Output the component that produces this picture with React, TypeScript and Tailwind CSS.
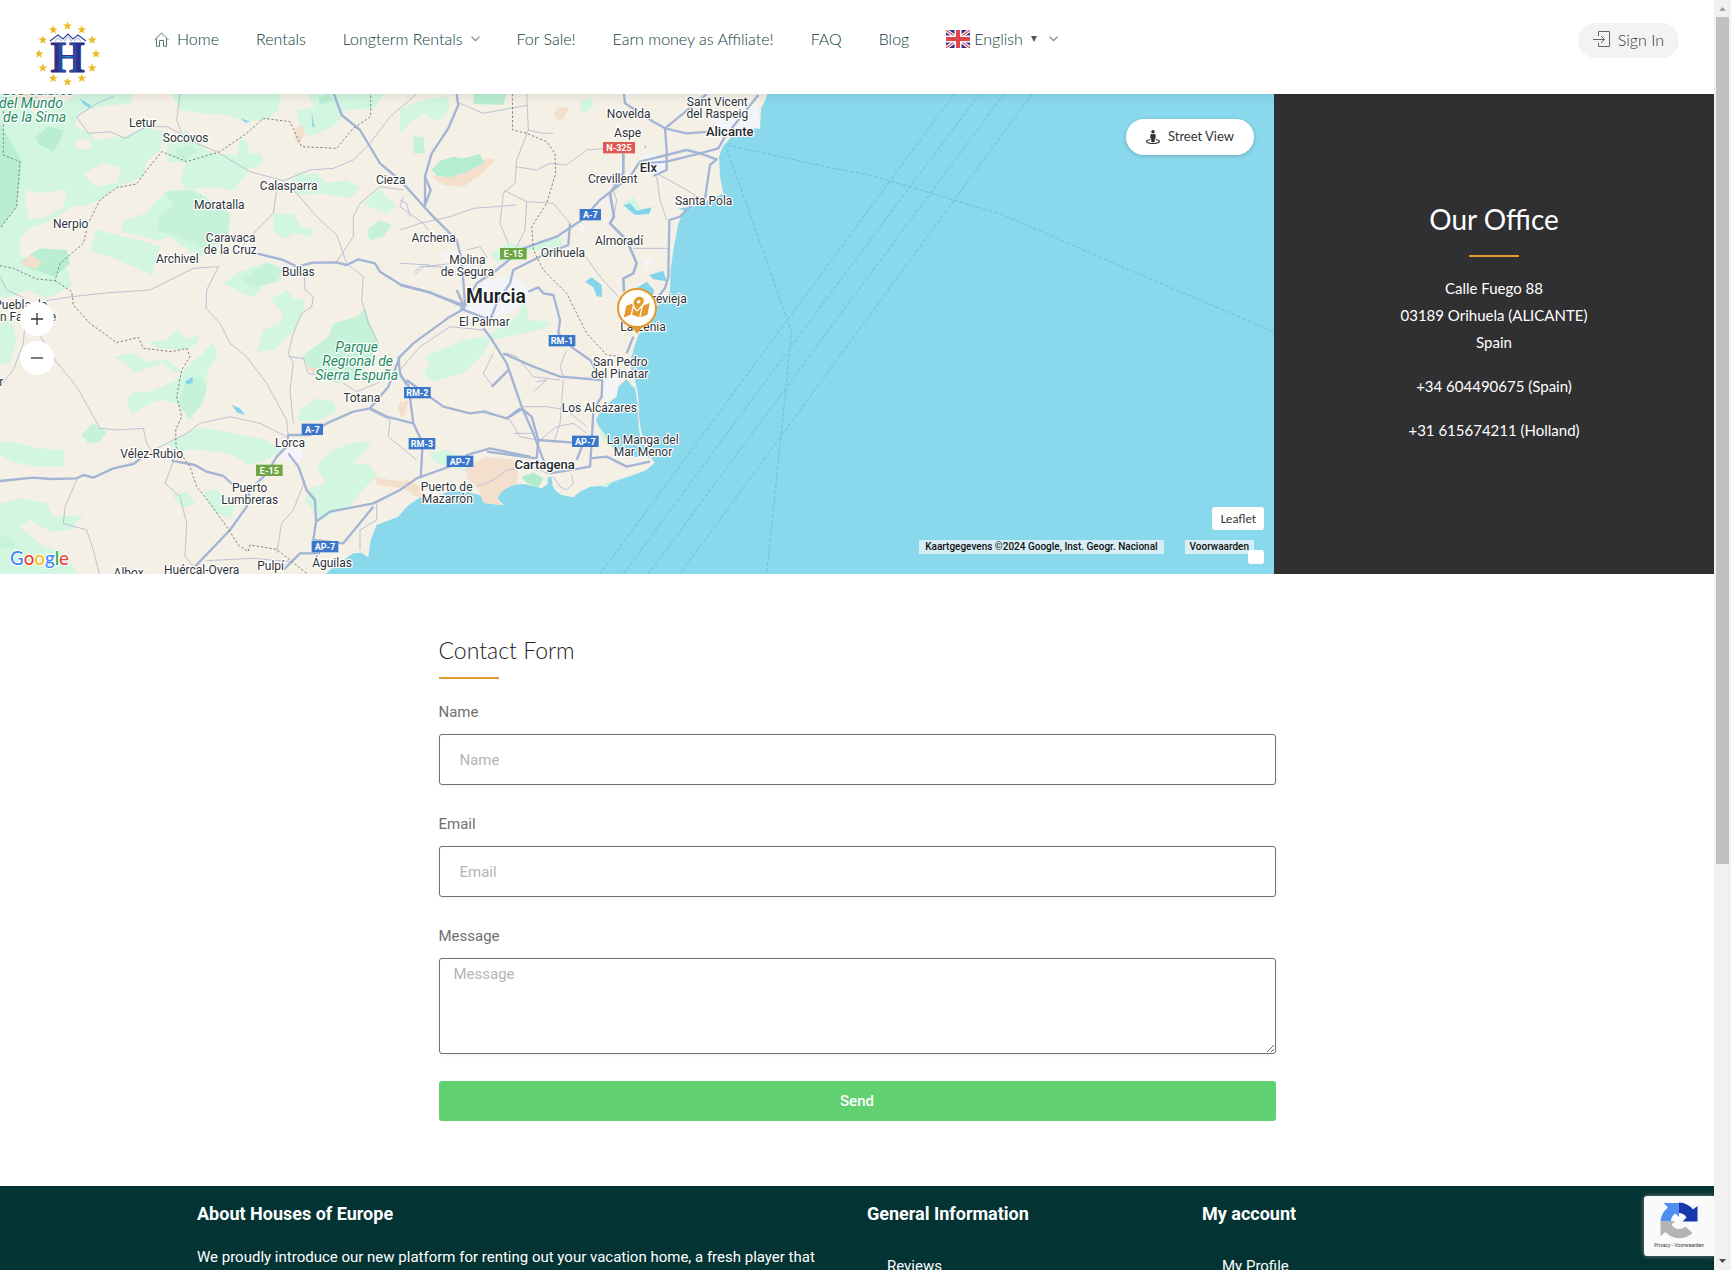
import type { ReactNode } from 'react'
import { FaMapMarkedAlt, FaStreetView } from 'react-icons/fa'

type Label = { x: number; y: number; text: string; kind?: 'town' | 'big' | 'city' | 'park' }
type Shield = { x: number; y: number; text: string; color: string }

const BLUE = '#3a76c9'
const GREEN = '#6ea545'
const RED = '#dd5a55'

// Map drawing units are a third of a pixel
const WEST_LABELS: Label[] = [
  { x: 115, y: 5, text: 'Los Calares', kind: 'park' },
  { x: 93, y: 43, text: 'del Mundo', kind: 'park' },
  { x: 104, y: 85, text: 'de la Sima', kind: 'park' },
  { x: 428, y: 100, text: 'Letur' },
  { x: 557, y: 145, text: 'Socovos' },
  { x: 866, y: 289, text: 'Calasparra' },
  { x: 1172, y: 271, text: 'Cieza' },
  { x: 658, y: 346, text: 'Moratalla' },
  { x: 212, y: 403, text: 'Nerpio' },
  { x: 692, y: 445, text: 'Caravaca' },
  { x: 691, y: 480, text: 'de la Cruz' },
  { x: 532, y: 508, text: 'Archivel' },
  { x: 895, y: 547, text: 'Bullas' },
  { x: 62, y: 646, text: 'Puebla de' },
  { x: 62, y: 682, text: 'Don Fadrique' },
  { x: -6, y: 877, text: 'ar' },
  { x: 1070, y: 775, text: 'Parque', kind: 'park' },
  { x: 1073, y: 817, text: 'Regional de', kind: 'park' },
  { x: 1070, y: 859, text: 'Sierra Espuña', kind: 'park' },
  { x: 1085, y: 925, text: 'Totana' },
  { x: 870, y: 1060, text: 'Lorca' },
  { x: 455, y: 1093, text: 'Vélez-Rubio' },
  { x: 749, y: 1195, text: 'Puerto' },
  { x: 749, y: 1230, text: 'Lumbreras' },
  { x: 386, y: 1450, text: 'Albox' },
  { x: 605, y: 1440, text: 'Huércal-Overa' },
  { x: 812, y: 1429, text: 'Pulpí' },
  { x: 996, y: 1420, text: 'Águilas' },
]

const EAST_LABELS: Label[] = [
  { x: 952, y: 37, text: 'Sant Vicent' },
  { x: 952, y: 73, text: 'del Raspeig' },
  { x: 686, y: 73, text: 'Novelda' },
  { x: 683, y: 130, text: 'Aspe' },
  { x: 989, y: 127, text: 'Alicante', kind: 'big' },
  { x: 745, y: 235, text: 'Elx', kind: 'big' },
  { x: 638, y: 268, text: 'Crevillent' },
  { x: 911, y: 334, text: 'Santa Pola' },
  { x: 101, y: 445, text: 'Archena' },
  { x: 657, y: 454, text: 'Almoradí' },
  { x: 489, y: 490, text: 'Orihuela' },
  { x: 202, y: 511, text: 'Molina' },
  { x: 202, y: 547, text: 'de Segura' },
  { x: 288, y: 620, text: 'Murcia', kind: 'city' },
  { x: 253, y: 697, text: 'El Palmar' },
  { x: 782, y: 628, text: 'Torrevieja' },
  { x: 729, y: 712, text: 'La Zenia' },
  { x: 661, y: 817, text: 'San Pedro' },
  { x: 659, y: 853, text: 'del Pinatar' },
  { x: 598, y: 955, text: 'Los Alcázares' },
  { x: 728, y: 1051, text: 'La Manga del' },
  { x: 729, y: 1087, text: 'Mar Menor' },
  { x: 434, y: 1126, text: 'Cartagena', kind: 'big' },
  { x: 140, y: 1192, text: 'Puerto de' },
  { x: 142, y: 1228, text: 'Mazarrón' },
]

const WEST_SHIELDS: Shield[] = [
  { x: 937, y: 1018, text: 'A-7', color: BLUE },
  { x: 808, y: 1141, text: 'E-15', color: GREEN },
  { x: 975, y: 1370, text: 'AP-7', color: BLUE },
]

const EAST_SHIELDS: Shield[] = [
  { x: 657, y: 173, text: 'N-325', color: RED },
  { x: 571, y: 374, text: 'A-7', color: BLUE },
  { x: 340, y: 491, text: 'E-15', color: GREEN },
  { x: 486, y: 752, text: 'RM-1', color: BLUE },
  { x: 52, y: 908, text: 'RM-2', color: BLUE },
  { x: 66, y: 1061, text: 'RM-3', color: BLUE },
  { x: 556, y: 1054, text: 'AP-7', color: BLUE },
  { x: 180, y: 1114, text: 'AP-7', color: BLUE },
]

const LABEL_STYLES = {
  town: 'fill-[#2e3338] text-[36px]',
  big: 'fill-[#25292d] text-[39px] font-medium',
  city: 'fill-[#202428] text-[58px] font-semibold',
  park: 'fill-[#1f8a64] text-[42px] italic',
}

const NAV_TEXT = "font-['Lato','Liberation_Sans',sans-serif] font-light"

export default function App() {
  return (
    <div className="flex h-screen bg-white font-['Roboto','Liberation_Sans',sans-serif]">
      <div className="relative min-w-0 flex-1 overflow-hidden">
        <Header />
        <main>
          <section className="flex">
            <OfficeMap />
            <OfficeInfo />
          </section>
          <ContactForm />
        </main>
        <Footer />
        <RecaptchaBadge />
      </div>
      <Scrollbar />
    </div>
  )
}

function Header() {
  return (
    <header className={`relative z-10 flex h-[94px] items-start bg-white pr-[35px] pl-9 text-[#0c3c3d] shadow-[0_0_12px_rgba(0,0,0,0.12)] ${NAV_TEXT}`}>
      <a href="#" aria-label="Houses of Europe" className="mt-5 mr-[54px]">
        <Logo />
      </a>
      <nav className="mt-[27px] flex flex-1 items-center gap-[37px] text-[16px] leading-6 whitespace-nowrap">
        <a href="#" className="flex items-center gap-2">
          <HomeIcon />
          Home
        </a>
        <a href="#">Rentals</a>
        <a href="#" className="flex items-center gap-2">
          Longterm Rentals
          <Chevron />
        </a>
        <a href="#">For Sale!</a>
        <a href="#">Earn money as Affiliate!</a>
        <a href="#">FAQ</a>
        <a href="#">Blog</a>
        <a href="#" className="flex items-center gap-1">
          <UnionJack />
          <span>English</span>
          <svg width="6" height="6" viewBox="0 0 6 6" className="mr-2 ml-1" aria-hidden="true">
            <path d="M0 0h6L3 6z" fill="#555" />
          </svg>
          <Chevron />
        </a>
      </nav>
      <a href="#" className="mt-[23px] flex h-[35px] items-center gap-2 rounded-full bg-[#f3f3f3] px-[15px] pb-[2px] text-[16px] text-[#333]">
        <SignInIcon />
        Sign In
      </a>
    </header>
  )
}

function OfficeMap() {
  return (
    <div className="relative h-[480px] min-w-0 flex-1 overflow-hidden bg-[#8ad8ec]">
      <MapDrawing />

      <div className="absolute top-[208px] left-5 flex flex-col gap-[5px]">
        <ZoomButton label="Zoom in">
          <path d="M6 0v12M0 6h12" />
        </ZoomButton>
        <ZoomButton label="Zoom out">
          <path d="M0 6h12" />
        </ZoomButton>
      </div>

      <button className="absolute top-[25px] right-5 flex h-9 w-32 items-center justify-center gap-2 rounded-full bg-white font-['Lato','Liberation_Sans',sans-serif] text-[13px] text-[#333] shadow-[0_1px_4px_rgba(0,0,0,0.2)]">
        <FaStreetView size={14} />
        Street View
      </button>

      <div className="absolute right-[10px] bottom-[10px] flex flex-col items-end text-[#111]">
        <a href="#" className="mb-[10px] rounded-[3px] bg-white px-2 font-['Lato','Liberation_Sans',sans-serif] text-[12px] leading-[23px] text-[#333]">
          Leaflet
        </a>
        <div className="mr-[10px] flex gap-[21px] text-[10px] leading-[14px] font-medium">
          <span className="bg-[#d6eef5] px-[6px]">Kaartgegevens ©2024 Google, Inst. Geogr. Nacional</span>
          <a href="#" className="bg-[#d6eef5] px-[5px]">Voorwaarden</a>
        </div>
        <span className="-mt-1 h-[14px] w-4 rounded-[3px] bg-white" />
      </div>
    </div>
  )
}

function ZoomButton({ label, children }: { label: string; children: ReactNode }) {
  return (
    <button aria-label={label} className="flex size-[34px] items-center justify-center rounded-full bg-white">
      <svg width="12" height="12" viewBox="0 0 12 12" stroke="#333" strokeWidth="1.3">{children}</svg>
    </button>
  )
}

function MapDrawing() {
  return (
    <svg
      viewBox="0 12 3822 1440"
      preserveAspectRatio="xMinYMid slice"
      className="block h-full w-full"
      role="img"
      aria-label="Map of the Murcia region"
      fill="none"
      strokeLinejoin="round"
    >
      {/* Land */}
      <path
        fill="#f5f0e5"
        d="M0 0H2305L2296 30L2283 55L2280 117L2240 105L2210 118L2190 145L2168 170L2157 200L2160 260L2170 310L2140 325L2090 345L2050 370L2035 400L2020 480L2012 540L2010 600L2000 622L1970 650L1955 680L1930 710L1915 735L1903 770L1892 810L1895 850L1908 885L1900 893L1880 868L1855 890L1850 920L1825 940L1800 965L1788 990L1800 1020L1815 1050L1850 1085L1900 1100L1945 1102L1965 1117L1940 1140L1900 1155L1840 1175L1800 1188L1770 1190L1740 1205L1720 1222L1685 1215L1668 1204L1658 1188L1655 1162L1644 1160L1643 1183L1625 1195L1600 1188L1570 1182L1530 1186L1505 1205L1492 1225L1512 1246L1455 1240L1440 1216L1400 1206L1350 1204L1300 1220L1260 1222L1220 1250L1195 1280L1130 1305L1112 1350L1105 1402L1085 1388L1060 1390L1030 1410L1000 1430L970 1460H0Z"
      />

      {/* Woods and hills, west */}
      <g fill="#d2f6e0">
        <path d="M0 12H20L60 40L110 70L150 50L180 40L240 12H400L392 40L300 50L235 70L225 110L265 125L285 150L370 140L440 110L500 130L480 180L440 215L430 260L350 290L300 330L260 345L210 350L160 390L100 410L60 440L60 500L130 505L200 530L215 590L140 625L80 600L20 625L0 620Z" />
        <path d="M515 12H845L835 60L800 90L735 95L680 75L600 70L540 60Z" />
        <path d="M920 12H1150L1125 55L1040 60L1000 110L925 140L900 110L890 60L945 50Z" />
        <path d="M1200 60L1225 45L1290 25L1345 20L1350 55L1320 90L1290 85L1270 70L1230 100L1200 130Z" />
        <path d="M500 165L560 120L590 160L640 190L700 195L760 215L740 250L700 300L620 290L560 300L540 270L560 220L500 215Z" />
        <path d="M470 330L520 300L600 310L650 340L690 370L680 430L640 480L600 500L540 465L510 440L470 450L430 440L365 425L370 390L440 370Z" />
        <path d="M290 420L350 435L420 450L480 470L470 510L455 555L400 530L330 500L270 480Z" />
        <path d="M720 140L745 160L745 190L785 190L790 220L760 235L710 210Z" />
        <path d="M890 255L950 250L980 280L1040 270L1080 295L1050 325L960 310L900 315L865 300Z" />
        <path d="M820 370L880 372L905 410L940 420L930 440L885 430L850 445L820 425Z" />
        <path d="M1090 340L1140 295L1160 325L1190 345L1160 370L1120 355Z" />
        <path d="M670 580L720 545L800 515L850 535L835 575L790 585L765 620L735 615L710 600Z" />
        <path d="M810 630L860 600L880 625L915 630L910 660L885 720L850 750L825 780L770 785L790 720L840 700L850 670Z" />
        <path d="M445 755L500 750L530 720L560 745L600 735L590 760L560 780L470 775Z" />
        <path d="M340 800L400 790L440 815L500 810L555 850L520 845L490 820L430 840L400 850L385 825Z" />
        <path d="M640 755L652 800L620 850L620 900L605 940L570 990L530 940L480 930L440 945L395 975L380 930L400 905L450 905L530 870L560 830L610 790Z" />
        <path d="M0 1055L60 1060L110 1075L190 1080L195 1130L110 1130L40 1115L0 1095Z" />
        <path d="M500 1060L600 1012L700 1030L800 1050L845 1080L800 1110L745 1125L690 1090L600 1080L530 1080Z" />
        <path d="M900 960L950 925L1000 935L1010 960L960 990L895 995Z" />
        <path d="M1115 1055L1060 1120L1110 1125L1130 1160L1080 1205L1050 1250L1000 1270L960 1295L915 1230L930 1195L980 1180L950 1130L990 1085L1050 1060Z" />
        <path d="M515 1215L560 1205L585 1240L550 1255ZM610 1205L650 1200L705 1250L690 1285L640 1265Z" />
        <path d="M0 1240L60 1225L140 1240L160 1280L250 1275L210 1320L150 1325L90 1290L60 1310L130 1370L180 1380L230 1440L220 1460H0Z" />
        <path d="M30 690L50 740L30 820L0 820V700Z" />
      </g>
      <g fill="#f5f0e5">
        <path d="M250 250L310 220L365 235L350 280L285 290Z" />
        <path d="M80 300L120 310L200 300L190 350L140 380L90 390L75 340Z" />
        <path d="M230 150L270 145L275 175L225 180Z" />
      </g>

      {/* Dense forest */}
      <g fill="#b9eed2">
        <path d="M0 100L30 150L65 215L50 350L0 415Z" />
        <path d="M105 145L140 110L190 120L180 150L160 185L120 165Z" />
        <path d="M60 515L120 475L200 480L210 520L165 560L120 545L75 530Z" />
        <path d="M955 25L985 12L1000 30L960 42Z" />
        <path d="M1420 12H1520L1510 45L1420 42Z" />
      </g>
      <g fill="#c6f2d9">
        <path d="M1240 140L1270 140L1275 190L1240 190Z" />
        <path d="M490 305L580 300L690 375L685 430L620 480L540 440L470 420L480 380L520 340Z" />
        <path d="M530 175L575 165L590 185L555 215L525 200Z" />
        <path d="M720 570L800 520L850 540L830 575L770 590L740 580Z" />
        <path d="M1100 420L1140 390L1175 405L1150 440L1110 450Z" />
        <path d="M905 800L985 740L1000 700L1070 680L1095 655L1110 700L1130 745L1120 800L1080 860L1010 880L940 850Z" />
        <path d="M535 940L560 870L605 860L620 900L600 950L565 985Z" />
        <path d="M245 1035L280 1000L320 1025L300 1055L265 1060Z" />
        <path d="M0 1335L45 1350L40 1375L0 1370Z" />
      </g>

      {/* Woods, east */}
      <g transform="translate(1200 0)">
        <g fill="#d2f6e0">
          <path d="M270 490L330 460L380 470L420 450L480 440L490 465L440 485L390 480L360 510L290 515Z" />
          <path d="M75 800L190 750L260 740L350 680L375 625L385 690L450 695L440 715L350 735L270 750L250 790L190 850L100 875L70 850L90 820Z" />
          <path d="M670 340L700 320L720 355L750 365L720 375L690 370Z" />
          <path d="M85 1090L140 1080L180 1100L215 1120L205 1145L150 1130L110 1120Z" />
          <path d="M540 35L570 22L582 45L560 68L540 60Z" />
          <path d="M590 1000L620 1040L640 1075L610 1050Z" />
          <path d="M600 1188L640 1172L620 1192Z" />
        </g>
        <path fill="#aeecca" d="M365 1160L400 1148L430 1165L415 1192L380 1180Z" />
        <g fill="#f3dfcb">
          <path d="M90 255L130 262L200 240L260 205L285 210L240 255L190 290L130 285Z" />
          <path d="M460 70L480 50L508 55L490 88L470 88Z" />
          <path d="M200 1130L260 1100L350 1110L355 1150L350 1180L310 1200L290 1225L308 1246L250 1238L235 1190L200 1165Z" />
          <path d="M0 930L20 950L10 980L0 980ZM10 1165L60 1190L70 1225L40 1215Z" />
        </g>
        <path fill="#b4edcf" d="M95 240L120 212L160 200L190 205L240 192L252 220L200 245L150 262L110 258Z" />
      </g>
      <g fill="#f3dfcb">
        <path d="M60 520L90 495L125 515L110 535L80 530Z" />
        <path d="M885 115L905 105L915 130L895 165L885 145Z" />
        <path d="M1125 1160L1170 1170L1220 1175L1245 1185L1265 1220L1200 1195L1130 1185Z" />
        <path d="M1195 940L1225 930L1215 975L1195 965ZM920 830L950 835L940 852Z" />
        <path d="M40 12L110 12L130 40L100 60L70 45Z" />
      </g>

      {/* Built-up areas */}
      <g fill="#f4f5f8">
        <path d="M840 1100L860 1080L900 1060L912 1100L880 1118Z" />
        <path d="M1400 660L1420 610L1460 570L1540 560L1590 600L1570 640L1520 670L1460 685Z" />
        <path d="M1320 490L1370 480L1420 520L1390 560L1350 530Z" />
        <path d="M1920 200L1960 190L2000 220L1980 250L1940 240Z" />
        <path d="M2140 80L2200 60L2270 40L2280 115L2200 120L2160 150Z" />
        <path d="M1730 420L1760 400L1750 430ZM1920 500L1960 510L1940 540Z" />
        <path d="M1800 860L1860 850L1850 910L1820 935Z" />
        <path d="M1590 1115L1640 1105L1670 1140L1630 1150Z" />
      </g>

      {/* Lakes and reservoirs */}
      <g fill="#84d5ec">
        <path d="M238 25L272 45L270 55L250 42ZM722 85L750 95L735 98ZM935 65L943 110L937 112Z" />
        <path d="M555 875L578 860L578 880L560 882ZM695 945L720 955L735 975L712 968Z" />
        <path d="M1755 575L1775 562L1805 585L1806 622L1790 618L1780 592ZM1948 555L1990 542L2000 574L1960 568Z" />
        <path d="M1908 595L1940 575L1962 600L1955 650L1920 610Z" />
        <path d="M1870 345L1890 340L1910 362L1955 352L1948 372L1905 375Z" />
        <path d="M2035 355L2080 350L2060 365ZM1932 165L1940 170L1936 178Z" />
      </g>
      <path stroke="#f5f3ee" strokeWidth="5" d="M1900 860L1912 915L1915 985L1922 1030L1945 1080L1955 1112" />

      {/* Secondary roads */}
      <g stroke="#bcc2d5" strokeWidth="3">
        <path d="M265 130L330 125L375 145L440 110L500 110L540 130L590 160L650 185L750 245L850 272L930 240L1000 235L1060 210L1110 160L1170 80L1250 12" />
        <path d="M265 130L230 80L290 40L340 20M540 12L530 90L545 130" />
        <path d="M850 272L890 310L950 380L1010 435L1040 520M830 300L820 370L770 420L730 465" />
        <path d="M655 530L580 535L450 600L330 608L215 620L140 632L110 720L165 810L230 890L300 1015L350 1020L430 1015L440 1060L460 1090" />
        <path d="M655 530L620 600L618 655L660 700L690 760L740 800L800 880L860 990L865 1040" />
        <path d="M912 540L915 600L940 620L935 650L905 670L880 730L865 790L880 820L870 900L880 1000" />
        <path d="M1010 515L1060 440L1060 380L1080 340L1140 290L1210 300M1045 525L1090 560L1085 630L1105 700L1135 760" />
        <path d="M460 1080L560 1030L600 1000L690 980L780 1000L860 1040" />
        <path d="M520 1115L495 1180L540 1220L560 1300L555 1400L590 1440M230 1170L195 1250L190 1300L260 1320L280 1380L300 1460" />
        <path d="M915 1170L880 1260L845 1300L830 1390M620 1412L760 1405L870 1415M1130 1240L1130 1290L1080 1320L1080 1380" />
        <path d="M1110 960L1170 990L1165 1040L1250 1110M1030 880L1070 905L1130 880L1170 845" />
        <path d="M0 890L40 840L70 760L75 700M0 560L20 600L75 625M1245 555L1270 530L1360 520M1210 320L1200 350L1270 400L1285 420" />
        <path d="M865 800L910 805L925 850L970 860" />
      </g>
      <g stroke="#bcc2d5" strokeWidth="3" transform="translate(1200 0)">
        <path d="M180 40L250 70L385 45M380 12L385 120L430 130L460 130M385 120L350 210L345 280L310 310L300 400L325 460M345 230L410 240L450 220L500 225L560 180L620 175" />
        <path d="M310 300L380 335L460 340L510 400M380 335L375 420L350 470M0 420L60 400L150 380L220 355L350 345" />
        <path d="M700 475L810 475M770 250L860 300L900 325M770 260L780 330L800 390M550 490L600 560L655 620" />
        <path d="M40 550L60 530L120 530L180 560M0 520L90 525M0 840L60 770L150 710L250 720M280 790L250 850L280 890L320 850" />
        <path d="M320 790L350 800L400 860L480 870M410 875L440 870L400 905M490 870L480 1000L460 1060M250 960L330 990L360 1040L410 1050" />
        <path d="M370 950L440 950L500 960L560 1010M420 1050L470 1010L520 1000L560 1030M340 1030L400 1030M500 780L480 830L490 860" />
        <path d="M460 1160L480 1190L500 1200L520 1180L515 1155M440 1150L400 1130L320 1140L280 1170L230 1190" />
        <path d="M640 300L650 330L640 390M30 380L20 340L0 330M200 480L240 470L260 500L240 530M710 930L715 1000" />
      </g>

      {/* Motorways */}
      <g stroke="#a3b4d5" strokeWidth="7">
        <path d="M0 1173L100 1163L150 1167L230 1165L250 1155L280 1163L340 1135L400 1122L430 1100M515 1112L585 1125L620 1145L670 1158L700 1185" />
        <path d="M770 490L850 510L890 530L940 518L1010 517L1040 525L1075 508L1125 520L1140 545L1200 583L1290 607L1390 650" />
        <path d="M1002 12L1025 75L1080 120L1140 220L1200 270L1290 370L1370 450L1385 510L1392 600L1395 650" />
        <path d="M585 1430L690 1320L740 1250L750 1200L800 1150L830 1100L860 1070L865 1035L930 1035L980 1000L1060 965L1110 955L1165 890L1200 800L1240 760L1350 680L1395 655" />
        <path d="M865 1090L895 1130L920 1200L945 1230L948 1295L990 1265L1120 1240L1200 1200L1250 1165L1320 1140L1390 1115L1400 1095L1470 1075L1590 1100M948 1295L940 1350L1030 1360L1120 1250" />
        <path d="M850 1440L900 1390L960 1390" />
        <path d="M1110 955L1160 980L1240 1000L1268 1060L1262 1160M1200 855L1225 885L1240 1000M1220 870L1330 950L1410 970L1450 965L1520 985L1570 955" />
        <path d="M1195 800L1200 850L1220 885" />
      </g>
      <g stroke="#a3b4d5" strokeWidth="7" transform="translate(1200 0)">
        <path d="M170 12L175 45L145 115L95 190L75 260L75 345L92 300L75 260" />
        <path d="M190 655L230 580L290 540L370 475L470 440L545 390L600 330L690 260L720 215L860 180L900 190L955 175L975 140L1075 15" />
        <path d="M672 12L675 40L760 95L795 115L860 130L930 125M795 115L800 180L800 240L760 258M795 115L850 70L920 12" />
        <path d="M670 190L670 250L630 310L642 380L630 400L680 450L710 520L700 550L670 565L672 605" strokeWidth="8" />
        <path d="M730 220L800 215L900 190L950 208L930 225L915 325L870 350L840 380L808 390L805 560L795 595L770 625" />
        <path d="M510 400L505 465L430 495L340 540L330 580L290 640L270 690L180 655" />
        <path d="M0 585L80 605L190 645M170 600L190 645M250 715L270 740L320 820L365 950L400 1030L445 1150" />
        <path d="M385 605L415 592L430 610L460 615L480 690L475 730L520 775L570 810L605 870L480 860L400 830L310 790" />
        <path d="M700 740L680 790M607 870L605 920L580 960L575 1060L570 1130L450 1150M530 1110L550 1060L415 1050M570 1105L620 1100L680 1130L750 1115" />
        <path d="M370 960L395 980L415 1050L410 1105L260 1085M275 890L325 840M320 985L360 955" />
      </g>

      {/* Province borders */}
      <g stroke="#82827f" strokeWidth="3" strokeDasharray="7 6">
        <path d="M10 12V195L60 215L50 350L0 415" />
        <path d="M0 527L40 535L110 567L165 572L180 520L250 460L265 400L300 330L350 293L410 282L440 240L485 185L560 215L660 185L740 130L790 85L870 95L905 170L1010 175L1060 115L1112 80V12" />
        <path d="M165 572L215 605L220 645L270 700L350 758L415 742L430 775L515 785L560 775L570 800L545 840L530 920L545 980L527 1020L528 1070L570 1130L590 1190L630 1240L680 1310L715 1365L745 1385L750 1365L830 1378L920 1450" />
        <path d="M1537 12L1538 120L1580 130L1640 155L1665 190L1667 250L1640 340L1595 410L1600 480L1630 540L1700 610L1760 730L1820 795L1870 800" />
      </g>

      {/* Ferry lines */}
      <g stroke="#5fc4e4" strokeWidth="3" strokeDasharray="12 6">
        <path d="M2180 165L2500 235L2610 255L3010 375L3400 545L3822 725" />
        <path d="M2180 175L2375 725L2300 1452" />
        <path d="M2862 12L2490 517L1800 1452M2938 12L2490 612L1870 1452M3012 12L2490 715L1945 1452M3096 12L2490 838L2040 1452" />
      </g>

      <MapLabels labels={WEST_LABELS} shields={WEST_SHIELDS} />
      <g transform="translate(1200 0)">
        <MapLabels labels={EAST_LABELS} shields={EAST_SHIELDS} />

        {/* Office pin */}
        <path d="M690 705L711 731L732 705Z" fill="#e39a2d" />
        <circle cx="711" cy="654" r="57" fill="#fff" stroke="#e39a2d" strokeWidth="6" />
        <g transform="translate(139 0) skewX(-12)">
          <FaMapMarkedAlt x={677} y={616} size={70} color="#e39a2d" />
        </g>
      </g>

      <text x="30" y="1426" className="font-['Lato',sans-serif] text-[56px] font-medium" stroke="#fff" strokeWidth="6" paintOrder="stroke">
        <tspan fill="#4285f4">G</tspan>
        <tspan fill="#ea4335">o</tspan>
        <tspan fill="#fbbc05">o</tspan>
        <tspan fill="#4285f4">g</tspan>
        <tspan fill="#34a853">l</tspan>
        <tspan fill="#ea4335">e</tspan>
      </text>
    </svg>
  )
}

function MapLabels({ labels, shields }: { labels: Label[]; shields: Shield[] }) {
  return (
    <g textAnchor="middle">
      {shields.map((s) => {
        const width = s.text.length > 4 ? 96 : s.text.length > 3 ? 80 : 64
        return (
          <g key={`${s.text}-${s.x}`}>
            <rect x={s.x - width / 2} y={s.y - 17} width={width} height="34" fill={s.color} />
            <text x={s.x} y={s.y + 10} fill="#fff" className="text-[27px] font-bold">{s.text}</text>
          </g>
        )
      })}
      {labels.map((l) => {
        const kind = l.kind ?? 'town'
        return (
          <text
            key={l.text}
            x={l.x}
            y={l.y + (kind === 'city' ? 18 : 11)}
            stroke="#fff"
            strokeWidth="7"
            paintOrder="stroke"
            className={LABEL_STYLES[kind]}
          >
            {l.text}
          </text>
        )
      })}
    </g>
  )
}

function OfficeInfo() {
  return (
    <aside className="flex h-[480px] w-[440px] shrink-0 flex-col items-center bg-[#303032] pt-[107px] text-center font-['Lato','Liberation_Sans',sans-serif] text-white">
      <h2 className="text-[28px] leading-9">Our Office</h2>
      <span className="mt-[18px] h-[2px] w-[50px] bg-[#e39a2d]" />
      <div className="mt-[18px] flex flex-col gap-[17px] text-[15px] leading-[27px]">
        <address className="not-italic">
          Calle Fuego 88
          <br />
          03189 Orihuela (ALICANTE)
          <br />
          Spain
        </address>
        <p>+34 604490675 (Spain)</p>
        <p>+31 615674211 (Holland)</p>
      </div>
    </aside>
  )
}

function ContactForm() {
  const field =
    'w-full rounded-[3px] border border-[#69727d] bg-white text-[15px] shadow-[0_1px_4px_rgba(0,0,0,0.06)] outline-none placeholder:text-[#b5b5b5]'

  return (
    <section className="mx-auto w-full max-w-[837px] pt-[60px] pb-[65px]">
      <h3 className="font-['Lato','Liberation_Sans',sans-serif] text-[23px] leading-8 font-light text-[#222]">Contact Form</h3>
      <span className="mt-[11px] block h-[2px] w-[60px] bg-[#e39a2d]" />

      <form className="mt-5 text-[15px] text-[#707070]" onSubmit={(e) => e.preventDefault()}>
        <label htmlFor="name" className="block leading-[27px]">Name</label>
        <input id="name" type="text" placeholder="Name" className={`${field} mt-2 mb-[26px] h-[51px] px-5`} />

        <label htmlFor="email" className="block leading-[27px]">Email</label>
        <input id="email" type="email" placeholder="Email" className={`${field} mt-2 mb-[26px] h-[51px] px-5`} />

        <label htmlFor="message" className="block leading-[27px]">Message</label>
        <textarea id="message" placeholder="Message" className={`${field} mt-2 block h-24 px-[14px] py-1 leading-[22px]`} />

        <button type="submit" className="mt-[27px] h-10 w-full rounded-[3px] bg-[#61d071] font-medium text-white">
          Send
        </button>
      </form>
    </section>
  )
}

function Footer() {
  return (
    <footer className="h-[320px] bg-[#033333] text-white">
      <div className="mx-auto flex max-w-[1340px] pt-[14px]">
        <div className="w-1/2 px-[10px]">
          <h4 className="text-[18px] leading-7 font-bold">About Houses of Europe</h4>
          <p className="mt-4 text-[15px] leading-[26px]">
            We proudly introduce our new platform for renting out your vacation home, a fresh player that
          </p>
        </div>
        <FooterColumn title="General Information" link="Reviews" />
        <FooterColumn title="My account" link="My Profile" />
      </div>
    </footer>
  )
}

function FooterColumn({ title, link }: { title: string; link: string }) {
  return (
    <div className="w-1/4 px-[10px]">
      <h4 className="text-[18px] leading-7 font-bold">{title}</h4>
      <ul className="mt-[26px] pl-5 text-[15px] leading-6">
        <li><a href="#">{link}</a></li>
      </ul>
    </div>
  )
}

function RecaptchaBadge() {
  return (
    <div className="absolute right-0 bottom-[14px] flex h-[60px] w-[70px] flex-col items-center rounded-l-[3px] bg-[#fafafa] pt-[6px] shadow-[0_0_5px_#808080]">
      <svg width="38" height="38" viewBox="0 0 38 38" aria-hidden="true">
        <path fill="#4c8ff0" d="M0.500 19A19 19 0 0 1 8 5.500L3.500 1H19V15L15.500 11.500A9 9 0 0 0 11 19Z" />
        <path fill="#1537ab" d="M19 0.500A19 19 0 0 1 33 7.500L37.500 4V19.500H22.500L26.500 15.500A9 9 0 0 0 19 11Z" />
        <path fill="#b3b4b6" d="M0.500 19H15L11.500 22.500A9 9 0 0 0 25.500 24.500L32.500 31A19 19 0 0 1 5.500 30L0.500 34Z" />
      </svg>
      <div className="text-[5px] leading-[10px] whitespace-nowrap text-[#333]">
        <a href="#">Privacy</a> - <a href="#">Voorwaarden</a>
      </div>
    </div>
  )
}

function Scrollbar() {
  return (
    <div className="flex w-[17px] shrink-0 flex-col items-center bg-[#f1f1f1]" aria-hidden="true">
      <svg width="17" height="17" viewBox="0 0 17 17"><path d="M5 11h7L8.500 7z" fill="#a3a3a3" /></svg>
      <div className="h-2/3 w-[13px] bg-[#c1c1c1]" />
      <svg width="17" height="17" viewBox="0 0 17 17" className="mt-auto"><path d="M5 6h7l-3.500 4z" fill="#505050" /></svg>
    </div>
  )
}

function Logo() {
  const stars = Array.from({ length: 12 }, (_, i) => {
    const angle = (i * Math.PI) / 6
    return { x: 31.5 + 28.5 * Math.sin(angle), y: 34 - 28 * Math.cos(angle) }
  })

  return (
    <svg width="64" height="68" viewBox="0 0 64 68" aria-hidden="true">
      {stars.map((s, i) => (
        <path
          key={i}
          transform={`translate(${s.x} ${s.y})`}
          fill="#ebbb25"
          d="M0-4.500L1.200-1.400L4.500-1.400L1.800 0.600L2.800 3.800L0 1.900L-2.800 3.800L-1.800 0.600L-4.500-1.400L-1.200-1.400Z"
        />
      ))}
      <g fill="none" stroke="#34439c" strokeWidth="1.200">
        <path d="M14 21l8-6 5 4 5-5 5 5 5-4 8 6" />
        <path d="M19 21l3-3 4 3M28 21l4-4 4 4M38 21l4-3 3 3" stroke="#b9c0dc" />
      </g>
      <defs>
        <linearGradient id="logo-fill" x1="0" x2="1">
          <stop offset="0.200" stopColor="#2c2f8c" />
          <stop offset="0.500" stopColor="#22a0dc" />
          <stop offset="0.800" stopColor="#2c2f8c" />
        </linearGradient>
      </defs>
      <text x="31.500" y="52" textAnchor="middle" fill="url(#logo-fill)" stroke="#2b2d86" strokeWidth="1" className="font-['Liberation_Serif',serif] text-[44px] font-bold">
        H
      </text>
    </svg>
  )
}

function HomeIcon() {
  return (
    <svg width="15" height="15" viewBox="0 0 15 15" fill="none" stroke="#55777a" aria-hidden="true">
      <path d="M0.700 7.800L7.500 1L14.300 7.800M2.500 6.500V14.300H5.500V8.500H9.500V14.300H12.500V6.500" />
    </svg>
  )
}

function SignInIcon() {
  return (
    <svg width="17" height="17" viewBox="0 0 17 17" fill="none" stroke="#666" aria-hidden="true">
      <path d="M5.500 5V0.500H16.500V15.500H5.500V12M0 8.500H11.500M8 5L11.500 8.500L8 12" />
    </svg>
  )
}

function Chevron() {
  return (
    <svg width="9" height="6" viewBox="0 0 9 6" fill="none" stroke="#6d8789" strokeWidth="1.200" aria-hidden="true">
      <path d="M0.500 0.700L4.500 4.700L8.500 0.700" />
    </svg>
  )
}

function UnionJack() {
  return (
    <svg width="24" height="18" viewBox="0 0 24 18" aria-hidden="true">
      <path fill="#2e3192" d="M0 0h24v18H0z" />
      <path stroke="#fff" strokeWidth="3.500" d="M0 0l24 18M24 0L0 18" />
      <path stroke="#e0434a" strokeWidth="1.200" d="M0 0l24 18M24 0L0 18" />
      <path stroke="#fff" strokeWidth="7" d="M12 0v18M0 9h24" />
      <path stroke="#e0434a" strokeWidth="4" d="M12 0v18M0 9h24" />
    </svg>
  )
}
